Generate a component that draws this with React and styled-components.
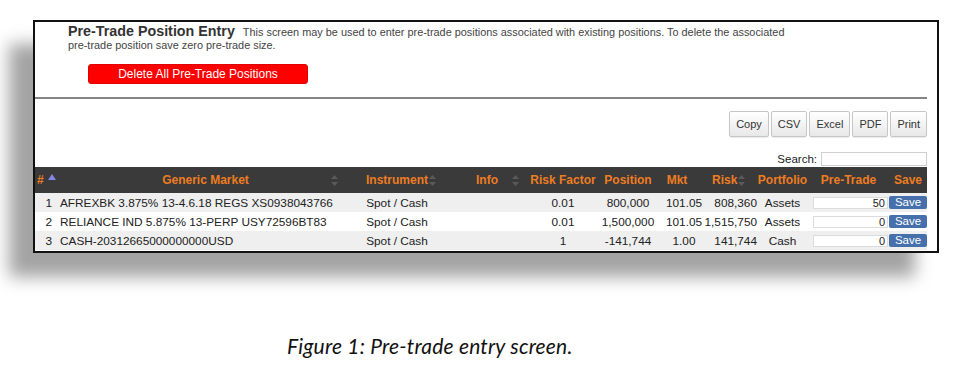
import React from 'react';
import styled, { createGlobalStyle } from 'styled-components';

const GlobalStyle = createGlobalStyle`
  body {
    margin: 0;
    background: #fff;
    font-family: "Liberation Sans", Arial, sans-serif;
  }
`

const Page = styled.div`
  padding: 20px 0 0 33px;
`

const Frame = styled.div`
  width: 906px;
  box-sizing: border-box;
  border: 2px solid #111;
  background: #fff;
  box-shadow: -24px 24px 16px rgba(0, 0, 0, 0.36);
  padding-bottom: 1px;
`

const Intro = styled.div`
  width: 722px;
  padding: 3px 0 0 33px;
  font-size: 10.9px;
  line-height: 12.5px;
  color: #444;
`

const Title = styled.span`
  display: inline-block;
  font-size: 14.3px;
  line-height: 13px;
  font-weight: bold;
  color: #333;
`

const Desc = styled.span`
  margin-left: 8px;
`

const DeleteButton = styled.button`
  display: block;
  margin: 13px 0 0 53px;
  width: 220px;
  height: 20px;
  padding: 0;
  border: 1px solid #e00000;
  border-radius: 3px;
  background: #ff0000;
  color: #fff;
  font-family: "Liberation Sans", Arial, sans-serif;
  font-size: 12px;
`

const Divider = styled.div`
  height: 2px;
  margin: 13px 10px 0 0;
  background: #858585;
`

const Toolbar = styled.div`
  display: flex;
  justify-content: flex-end;
  gap: 2px;
  margin: 12px 10px 0 0;
`

const ToolButton = styled.button`
  height: 26px;
  padding: 0 6px;
  border: 1px solid #c6c6c6;
  border-radius: 2px;
  background: linear-gradient(#ffffff, #e8e8e8);
  box-shadow: 0 1px 1px rgba(0, 0, 0, 0.08);
  color: #333;
  font-family: "Liberation Sans", Arial, sans-serif;
  font-size: 11px;
`

const SearchRow = styled.div`
  display: flex;
  justify-content: flex-end;
  align-items: center;
  gap: 4px;
  margin: 15px 10px 0 0;
  font-size: 11.5px;
  color: #222;
`

const SearchInput = styled.input`
  width: 106px;
  height: 14px;
  box-sizing: border-box;
  border: 1px solid #cfcfcf;
  padding: 0;
`

const Table = styled.table`
  width: 892px;
  table-layout: fixed;
  border-collapse: collapse;
  margin-top: 1px;
  font-size: 11.8px;
  color: #222;
`

const Th = styled.th`
  position: relative;
  height: 26px;
  padding: 0 ${p => p.$pr || 0}px 0 ${p => p.$pl || 0}px;
  background: #3a3a3a;
  color: #ee7d22;
  font-size: 12px;
  font-weight: bold;
  text-align: ${p => p.$align || 'center'};
  white-space: nowrap;
`

const SortIcon = styled.svg`
  position: absolute;
  top: 8px;
  right: ${p => p.$right}px;
`

const Row = styled.tr`
  background: ${p => (p.$odd ? '#efefef' : '#fff')};
`

const Td = styled.td`
  height: 19px;
  padding: 0 ${p => p.$pr || 0}px 0 ${p => p.$pl || 0}px;
  text-align: ${p => p.$align || 'center'};
  white-space: nowrap;
`

const PreTradeInput = styled.input`
  display: block;
  width: 75px;
  height: 12px;
  margin-left: 5px;
  box-sizing: border-box;
  border: 1px solid #dcdcdc;
  padding: 0 2px 0 0;
  text-align: right;
  font-family: "Liberation Sans", Arial, sans-serif;
  font-size: 11px;
  color: #222;
`

const SaveButton = styled.button`
  display: block;
  width: 38px;
  height: 13px;
  padding: 0;
  border: none;
  border-radius: 2px;
  background: #4570ac;
  color: #fff;
  font-family: "Liberation Sans", Arial, sans-serif;
  font-size: 11.5px;
  line-height: 13px;
`

const Caption = styled.div`
  margin-top: 80px;
  padding-left: 254px;
  font-family: Lato, "Open Sans", sans-serif;
  font-style: italic;
  font-size: 21px;
  letter-spacing: 0.2px;
  color: #111;
`

const columns = [
  { key: 'num', label: '#', w: 22, align: 'right', pr: 5, hAlign: 'left', hpl: 2 },
  { key: 'market', label: 'Generic Market', w: 297, align: 'left', pl: 3, sort: 16 },
  { key: 'instrument', label: 'Instrument', w: 86, sort: 4 },
  { key: 'info', label: 'Info', w: 86, hpl: 8, sort: 7 },
  { key: 'rf', label: 'Risk Factor', w: 74 },
  { key: 'position', label: 'Position', w: 56 },
  { key: 'mkt', label: 'Mkt', w: 48, pl: 8, hpr: 6 },
  { key: 'risk', label: 'Risk', w: 53, align: 'right', pr: 0, hAlign: 'left', hpl: 8, sort: 12 },
  { key: 'portfolio', label: 'Portfolio', w: 51 },
  { key: 'pretrade', label: 'Pre-Trade', w: 81 },
  { key: 'save', label: 'Save', w: 38 },
]

const rows = [
  { num: 1, market: 'AFREXBK 3.875% 13-4.6.18 REGS XS0938043766', instrument: 'Spot / Cash', info: '', rf: '0.01', position: '800,000', mkt: '101.05', risk: '808,360', portfolio: 'Assets', pretrade: '50' },
  { num: 2, market: 'RELIANCE IND 5.875% 13-PERP USY72596BT83', instrument: 'Spot / Cash', info: '', rf: '0.01', position: '1,500,000', mkt: '101.05', risk: '1,515,750', portfolio: 'Assets', pretrade: '0' },
  { num: 3, market: 'CASH-20312665000000000USD', instrument: 'Spot / Cash', info: '', rf: '1', position: '-141,744', mkt: '1.00', risk: '141,744', portfolio: 'Cash', pretrade: '0' },
]

const SortArrows = ({ right }) => (
  <SortIcon $right={right} width="7" height="11" viewBox="0 0 7 11">
    <path d="M3.5 0 L7 4 L0 4 Z M3.5 11 L7 7 L0 7 Z" fill="#5a5a5a" />
  </SortIcon>
)

const AscArrow = () => (
  <svg width="8" height="7" viewBox="0 0 8 7" style={{ verticalAlign: 'top', marginLeft: 4, marginTop: 1 }}>
    <path d="M4 0 L8 6 L0 6 Z" fill="#8585e6" />
  </svg>
)

const renderCell = (col, row) => {
  if (col.key === 'pretrade') return <PreTradeInput defaultValue={row.pretrade} />
  if (col.key === 'save') return <SaveButton>Save</SaveButton>
  return row[col.key]
}

export default function App() {
  return (
    <Page>
      <GlobalStyle />
      <Frame>
        <Intro>
          <Title>Pre-Trade Position Entry</Title>
          <Desc>This screen may be used to enter pre-trade positions associated with existing positions. To delete the associated pre-trade position save zero pre-trade size.</Desc>
        </Intro>
        <DeleteButton>Delete All Pre-Trade Positions</DeleteButton>
        <Divider />
        <Toolbar>
          <ToolButton>Copy</ToolButton>
          <ToolButton>CSV</ToolButton>
          <ToolButton>Excel</ToolButton>
          <ToolButton>PDF</ToolButton>
          <ToolButton>Print</ToolButton>
        </Toolbar>
        <SearchRow>
          <span>Search:</span>
          <SearchInput />
        </SearchRow>
        <Table>
          <colgroup>
            {columns.map(c => <col key={c.key} style={{ width: c.w }} />)}
          </colgroup>
          <thead>
            <tr>
              {columns.map(c => (
                <Th key={c.key} $align={c.hAlign} $pl={c.hpl} $pr={c.hpr}>
                  {c.label}
                  {c.key === 'num' && <AscArrow />}
                  {c.sort && <SortArrows right={c.sort} />}
                </Th>
              ))}
            </tr>
          </thead>
          <tbody>
            {rows.map((r, i) => (
              <Row key={r.num} $odd={i % 2 === 0}>
                {columns.map(c => (
                  <Td key={c.key} $align={c.align} $pl={c.pl} $pr={c.pr}>
                    {renderCell(c, r)}
                  </Td>
                ))}
              </Row>
            ))}
          </tbody>
        </Table>
      </Frame>
      <Caption>Figure 1: Pre-trade entry screen.</Caption>
    </Page>
  )
}
